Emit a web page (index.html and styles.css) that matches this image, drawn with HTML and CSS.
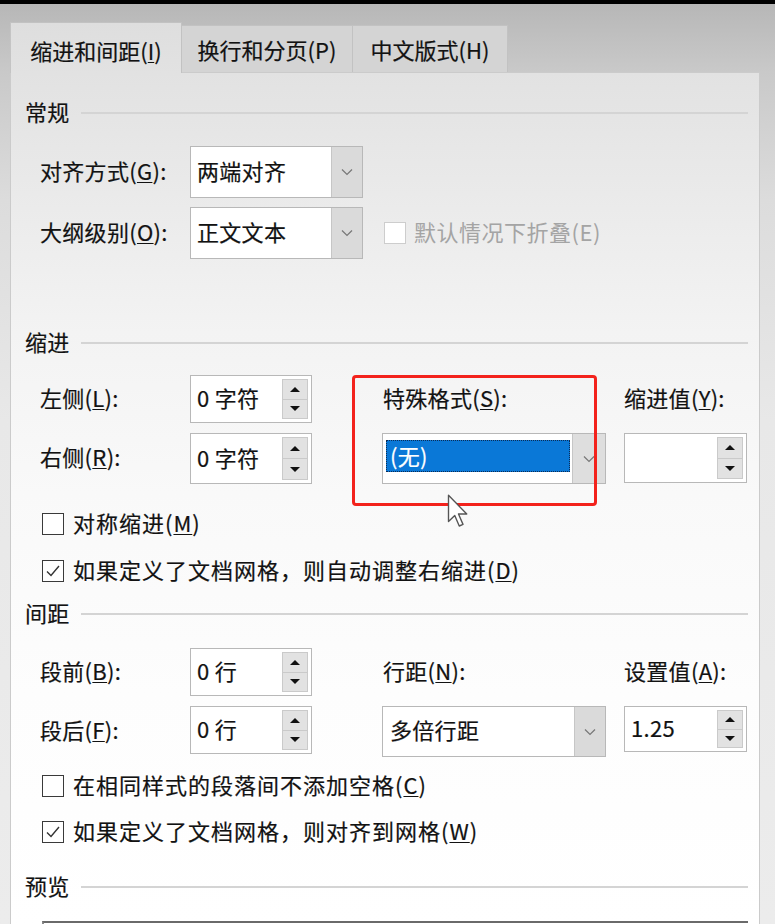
FILE: index.html
```html
<!DOCTYPE html>
<html lang="zh-CN">
<head>
<meta charset="utf-8">
<title>段落</title>
<link rel="stylesheet" href="styles.css">
</head>
<body>
<div class="topbar"></div>
<div class="tabs">
  <div class="tab active t1">缩进和间距(<u>I</u>)</div>
  <div class="tab t2">换行和分页(P)</div>
  <div class="tab t3">中文版式(H)</div>
</div>
<div class="panel">
  <div class="section-title st-general"><span>常规</span><i class="rule"></i></div>
  <div class="grid g-general">
    <span class="lbl">对齐方式(<u>G</u>):</span>
    <div class="select w173"><span class="val">两端对齐</span><span class="drop"><svg width="12" height="8" viewBox="0 0 12 8"><polyline points="1,1.5 6,6.5 11,1.5" fill="none" stroke="#777" stroke-width="1.2"/></svg></span></div>
    <span></span>
    <span class="lbl">大纲级别(<u>O</u>):</span>
    <div class="select w173"><span class="val">正文文本</span><span class="drop"><svg width="12" height="8" viewBox="0 0 12 8"><polyline points="1,1.5 6,6.5 11,1.5" fill="none" stroke="#777" stroke-width="1.2"/></svg></span></div>
    <span class="check disabled"><span class="box"></span><span class="txt">默认情况下折叠(E)</span></span>
  </div>

  <div class="section-title st-indent"><span>缩进</span><i class="rule"></i></div>
  <div class="grid g-indent">
    <span class="lbl">左侧(<u>L</u>):</span>
    <div class="spin"><span class="val">0 字符</span><span class="btns"><span class="sb"><i class="tri-up"></i></span><span class="sb"><i class="tri-dn"></i></span></span></div>
    <span class="lbl lbl-col">特殊格式(<u>S</u>):</span>
    <span class="lbl">缩进值(<u>Y</u>):</span>

    <span class="lbl">右侧(<u>R</u>):</span>
    <div class="spin"><span class="val">0 字符</span><span class="btns"><span class="sb"><i class="tri-up"></i></span><span class="sb"><i class="tri-dn"></i></span></span></div>
    <div class="select focus w224"><span class="val"><span class="sel">(无)</span></span><span class="drop"><svg width="12" height="8" viewBox="0 0 12 8"><polyline points="1,1.5 6,6.5 11,1.5" fill="none" stroke="#777" stroke-width="1.2"/></svg></span></div>
    <div class="spin h50"><span class="val"></span><span class="btns"><span class="sb"><i class="tri-up"></i></span><span class="sb"><i class="tri-dn"></i></span></span></div>
  </div>

  <div class="check cb cb1"><span class="box"></span><span class="txt">对称缩进(<u>M</u>)</span></div>
  <div class="check cb cb2"><span class="box"><svg width="18" height="18" viewBox="0 0 18 18"><polyline points="3,9.5 7,13.5 15,4" fill="none" stroke="#333" stroke-width="1.4"/></svg></span><span class="txt">如果定义了文档网格，则自动调整右缩进(<u>D</u>)</span></div>

  <div class="section-title st-spacing"><span>间距</span><i class="rule"></i></div>
  <div class="grid g-spacing">
    <span class="lbl">段前(<u>B</u>):</span>
    <div class="spin"><span class="val">0 行</span><span class="btns"><span class="sb"><i class="tri-up"></i></span><span class="sb"><i class="tri-dn"></i></span></span></div>
    <span class="lbl lbl-col">行距(<u>N</u>):</span>
    <span class="lbl">设置值(<u>A</u>):</span>

    <span class="lbl">段后(<u>F</u>):</span>
    <div class="spin h48"><span class="val">0 行</span><span class="btns"><span class="sb"><i class="tri-up"></i></span><span class="sb"><i class="tri-dn"></i></span></span></div>
    <div class="select w224"><span class="val pad8">多倍行距</span><span class="drop"><svg width="12" height="8" viewBox="0 0 12 8"><polyline points="1,1.5 6,6.5 11,1.5" fill="none" stroke="#777" stroke-width="1.2"/></svg></span></div>
    <div class="spin h46"><span class="val">1.25</span><span class="btns"><span class="sb"><i class="tri-up"></i></span><span class="sb"><i class="tri-dn"></i></span></span></div>
  </div>

  <div class="check cb cb3"><span class="box"></span><span class="txt">在相同样式的段落间不添加空格(<u>C</u>)</span></div>
  <div class="check cb cb4"><span class="box"><svg width="18" height="18" viewBox="0 0 18 18"><polyline points="3,9.5 7,13.5 15,4" fill="none" stroke="#333" stroke-width="1.4"/></svg></span><span class="txt">如果定义了文档网格，则对齐到网格(<u>W</u>)</span></div>

  <div class="section-title st-preview"><span>预览</span><i class="rule"></i></div>
  <div class="preview"></div>

  <div class="highlight"></div>
  <svg class="cursor" width="23" height="35" viewBox="0 0 18 28"><path d="M1 1 L1 22 L6 17.2 L9.6 25.6 L12.6 24.3 L9 16 L15.6 16 Z" fill="#fff" stroke="#555" stroke-width="1.1" stroke-linejoin="round"/></svg>
</div>
</body>
</html>
```
FILE: styles.css
```css
html, body {
  margin: 0;
  padding: 0;
}
body {
  width: 775px;
  height: 924px;
  overflow: hidden;
  font-family: "Noto Sans CJK SC", "Microsoft YaHei", sans-serif;
  font-size: 22px;
  color: #121212;
  -webkit-text-stroke: 0.2px #121212;
  letter-spacing: 0.3px;
  background: linear-gradient(#b6b6b6 0px, #c9c9c9 72px, #dcdcdc 200px, #e8e8e8 420px, #ececec 924px);
}
u {
  text-decoration: underline;
  text-underline-offset: 2px;
  text-decoration-thickness: 1px;
}
.topbar {
  height: 4px;
  background: #000;
}
.tabs {
  display: flex;
  align-items: flex-end;
  height: 68px;
  padding-left: 10px;
  position: relative;
  z-index: 2;
}
.tab {
  box-sizing: border-box;
  height: 47px;
  padding-top: 9px;
  line-height: 28px;
  text-align: center;
  letter-spacing: 0;
  background: #d4d4d4;
  border: 1px solid #c2c2c2;
  border-bottom: none;
  border-left: none;
}
.tab.active {
  height: 51px;
  margin-bottom: -1px;
  padding-top: 13px;
  background: linear-gradient(#dedede, #e2e2e2);
  border-left: 1px solid #c4c4c4;
}
.t1 { width: 172px; }
.t2 { width: 171px; }
.t3 { width: 155px; }

.panel {
  position: relative;
  margin-left: 10px;
  width: 750px;
  height: 852px;
  box-sizing: border-box;
  border: 1px solid #cbcbcb;
  border-bottom: none;
  padding: 0 11px 0 14px;
  background: linear-gradient(#e2e2e2 0px, #eaeaea 120px, #f3f3f3 260px, #f9f9f9 420px, #fdfdfd 620px, #ffffff 852px);
}
.section-title {
  display: flex;
  align-items: center;
  height: 30px;
  line-height: 30px;
}
.section-title span {
  padding-bottom: 4px;
}
.section-title .rule {
  flex: 1;
  height: 2px;
  margin-left: 11px;
  background: #d4d4d4;
}
.st-general { margin-top: 25px; }
.st-indent { margin-top: 69px; }
.st-spacing { margin-top: 13px; }
.st-preview { margin-top: 25px; }

.grid {
  display: grid;
  margin-left: 15px;
}
.g-general {
  grid-template-columns: 150px 194px auto;
  grid-template-rows: 52px 52px;
  row-gap: 9px;
  margin-top: 18px;
}
.g-indent {
  grid-template-columns: 150px 192px 242px 123px;
  grid-template-rows: 48px 51px;
  row-gap: 10px;
  margin-top: 17px;
}
.g-spacing {
  grid-template-columns: 150px 192px 242px 123px;
  grid-template-rows: 48px 51px;
  row-gap: 10px;
  margin-top: 19px;
}
.lbl {
  align-self: center;
  white-space: nowrap;
  padding-bottom: 5px;
}
.lbl-col {
  padding-left: 1px;
}

.select {
  display: flex;
  box-sizing: border-box;
  border: 1px solid #b8b8b8;
  background: #fff;
}
.w173 { width: 173px; }
.w224 { width: 224px; }
.select .val {
  flex: 1;
  display: flex;
  align-items: center;
  padding-left: 6px;
  padding-bottom: 5px;
  white-space: nowrap;
}
.select .val.pad8 { padding-left: 7px; }
.select .drop {
  width: 30px;
  display: flex;
  align-items: center;
  justify-content: center;
  background: #dadada;
  border-left: 1px solid #c6c6c6;
}
.select.focus .val {
  padding: 6px 2px 11px 3px;
  align-items: stretch;
}
.select.focus .sel {
  flex: 1;
  display: flex;
  align-items: center;
  padding-left: 4px;
  padding-bottom: 3px;
  background: #0a78d7;
  color: #fff;
  -webkit-text-stroke: 0.2px #fff;
  outline: 1px dotted #0c2c55;
  outline-offset: -1px;
}
.select.focus .drop {
  width: 32px;
  background: #dedede;
}

.spin {
  display: flex;
  box-sizing: border-box;
  width: 122px;
  border: 1px solid #b8b8b8;
  background: #fff;
  padding: 3px 3px 3px 6px;
}
.spin.h50 { height: 50px; width: 123px; }
.spin.h48 { height: 48px; }
.spin.h46 { height: 46px; width: 123px; }
.spin .val {
  flex: 1;
  display: flex;
  align-items: center;
  padding-bottom: 4px;
  white-space: nowrap;
}
.btns {
  display: flex;
  flex-direction: column;
  width: 26px;
  gap: 0;
}
.sb {
  flex: 1;
  display: flex;
  align-items: center;
  justify-content: center;
  background: #e2e2e2;
  border: 1px solid #cacaca;
}
.sb + .sb { border-top: none; }
.tri-up, .tri-dn {
  display: block;
  width: 0;
  height: 0;
  border-left: 5px solid transparent;
  border-right: 5px solid transparent;
}
.tri-up { border-bottom: 5px solid #111; }
.tri-dn { border-top: 5px solid #111; }

.check {
  display: flex;
  align-items: center;
  white-space: nowrap;
}
.check .txt {
  padding-bottom: 4px;
  letter-spacing: 1px;
}
.check .box {
  box-sizing: border-box;
  width: 22px;
  height: 22px;
  border: 1.5px solid #3a3a3a;
  background: #fff;
  margin-right: 9px;
  display: flex;
  align-items: center;
  justify-content: center;
}
.check.disabled {
  color: #a4a4a4;
  -webkit-text-stroke: 0;
  align-self: center;
}
.check.disabled .txt {
  letter-spacing: 0.5px;
}
.check.disabled .box {
  border: 1px solid #cdcdcd;
  margin-right: 8px;
}
.cb {
  height: 30px;
  margin-left: 17px;
}
.cb1 { margin-top: 25px; }
.cb2 { margin-top: 17px; }
.cb3 { margin-top: 14px; }
.cb4 { margin-top: 16px; }

.preview {
  margin-top: 19px;
  margin-left: 17px;
  height: 40px;
  border-top: 2px solid #6a6a6a;
  border-left: 2px solid #8a8a8a;
  background: #fff;
}

.highlight {
  position: absolute;
  left: 341px;
  top: 302px;
  width: 245px;
  height: 131px;
  box-sizing: border-box;
  border: 3px solid #f3221c;
  border-radius: 4px;
}
.cursor {
  position: absolute;
  left: 436px;
  top: 421px;
}
```
